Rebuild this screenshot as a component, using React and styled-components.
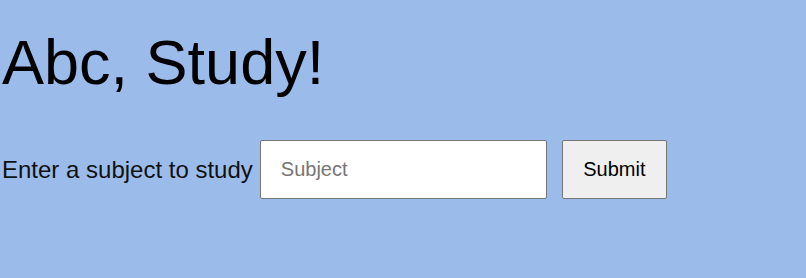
import React from "react";
import styled, { createGlobalStyle } from "styled-components";

const Global = createGlobalStyle`
  html, body { margin: 0; padding: 0; background: #9bbceb; }
  body { font-family: "Liberation Sans", Arial, sans-serif; color: #000; }
`;

const Page = styled.main`
  width: 806px;
  height: 278px;
  box-sizing: border-box;
  padding: 26px 0 0 2px;
  background: #9bbceb;
`;

const Title = styled.h1`
  margin: 0;
  font-size: 63px;
  font-weight: 400;
  line-height: 72px;
`;

const Form = styled.form`
  display: flex;
  align-items: center;
  margin-top: 42px;
`;

const Label = styled.label`
  font-size: 24px;
  color: #111;
  margin-right: 7px;
  padding-top: 1px;
`;

const Input = styled.input`
  box-sizing: border-box;
  width: 287px;
  height: 59px;
  padding: 0 20px;
  border: 1px solid #767676;
  border-radius: 2px;
  background: #fff;
  font-family: "Liberation Sans", Arial, sans-serif;
  font-size: 20px;
  outline: none;
  &::placeholder { color: #757575; }
`;

const Button = styled.button`
  box-sizing: border-box;
  margin-left: 15px;
  width: 105px;
  height: 59px;
  border: 1px solid #767676;
  border-radius: 2px;
  background: #efefef;
  font-family: "Liberation Sans", Arial, sans-serif;
  font-size: 20px;
  color: #000;
  padding: 0;
`;

export default function App() {
  return (
    <>
      <Global />
      <Page>
        <Title>Abc, Study!</Title>
        <Form onSubmit={(e) => e.preventDefault()}>
          <Label htmlFor="subject">Enter a subject to study</Label>
          <Input id="subject" placeholder="Subject" />
          <Button type="submit">Submit</Button>
        </Form>
      </Page>
    </>
  );
}
